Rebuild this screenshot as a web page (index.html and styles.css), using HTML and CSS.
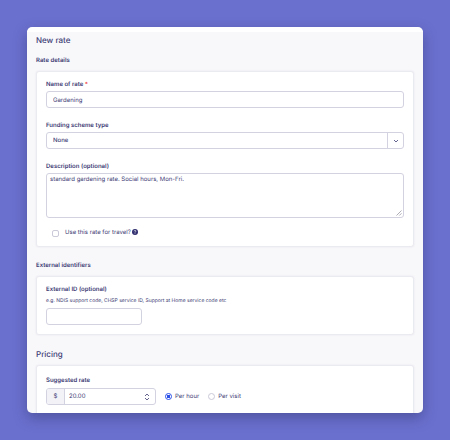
FILE: index.html
```html
<!DOCTYPE html>
<html lang="en">
<head>
  <meta charset="UTF-8">
  <meta name="viewport" content="width=device-width, initial-scale=1.0">
  <title>New rate</title>
  <link rel="stylesheet" href="styles.css">
</head>
<body>

  <main class="window">
    <form class="page">
      <h1>New rate</h1>

      <h2>Rate details</h2>
      <section class="card">
        <div class="field">
          <label for="name">Name of rate <span class="required">*</span></label>
          <input class="control" type="text" id="name" value="Gardening">
        </div>
        <div class="field">
          <label for="scheme">Funding scheme type</label>
          <div class="select">
            <select class="control" id="scheme">
              <option>None</option>
            </select>
            <span class="select-arrow">
              <svg width="6" height="4" viewBox="0 0 6 4"><path d="M1 1l2 2 2-2"/></svg>
            </span>
          </div>
        </div>
        <div class="field">
          <label for="description">Description (optional)</label>
          <div class="area">
            <textarea class="control" id="description">standard gardening rate. Social hours, Mon-Fri.</textarea>
            <svg class="grip" width="6" height="6" viewBox="0 0 6 6"><path d="M.5 5.5l5-5M3.3 5.5l2.2-2.2"/></svg>
          </div>
        </div>
        <div class="travel">
          <input type="checkbox" id="travel">
          <label for="travel">Use this rate for travel?</label>
          <svg class="help" width="6" height="6" viewBox="0 0 12 12">
            <circle cx="6" cy="6" r="6"/>
            <path d="M4.200 4.600c0-2.400 3.600-2.400 3.600-.2C7.800 5.800 6 5.700 6 7.200M6 8.500v1.200"/>
          </svg>
        </div>
      </section>

      <h2>External identifiers</h2>
      <section class="card">
        <div class="field">
          <label for="external">External ID (optional)</label>
          <p class="hint">e.g. NDIS support code, CHSP service ID, Support at Home service code etc</p>
          <input class="control short" type="text" id="external">
        </div>
      </section>

      <h1>Pricing</h1>
      <section class="card card-pricing">
        <div class="field">
          <label for="rate">Suggested rate</label>
          <div class="pricing">
            <div class="money">
              <span class="currency">$</span>
              <input type="text" inputmode="decimal" id="rate" value="20.00">
              <svg class="stepper" width="6" height="8" viewBox="0 0 6 8"><path d="M1 3l2-2 2 2M1 5l2 2 2-2"/></svg>
            </div>
            <label class="choice"><input type="radio" name="unit" checked>Per hour</label>
            <label class="choice"><input type="radio" name="unit">Per visit</label>
          </div>
        </div>
      </section>
    </form>
  </main>

</body>
</html>
```

FILE: styles.css
```css
* {
  box-sizing: border-box;
}

body {
  margin: 0;
  height: 100vh;
  padding: 27px;
  background: #6a70ce;
  color: #3d3b74;
  font-family: Inter, sans-serif;
  font-size: 6px;
  line-height: 8px;
  text-rendering: geometricPrecision;
}

.window {
  height: 100%;
  overflow: hidden;
  border-top: 5px solid #ffffff;
  border-radius: 5px;
  background: #f8f8fb;
  box-shadow: 0 5px 14px rgba(40, 40, 90, 0.4);
}

.page {
  padding: 3px 9px;
}

h1 {
  margin: 0;
  font-size: 8px;
  font-weight: 500;
  line-height: 10px;
}

h2 {
  margin: 12px 0 6px;
  font-size: 6px;
  font-weight: 600;
  line-height: 8px;
}

.card {
  padding: 9px;
  border: 1px solid #eaeaf1;
  border-radius: 3px;
  background: #ffffff;
  box-shadow: 0 0 2px rgba(60, 60, 110, 0.1);
}

.field {
  display: flex;
  flex-direction: column;
  gap: 2px;
}

.field + .field {
  margin-top: 14px;
}

.field > label {
  font-weight: 600;
}

.required {
  color: #ee4a4a;
}

input,
select,
textarea {
  margin: 0;
  color: inherit;
  font: inherit;
  text-rendering: inherit;
}

.control {
  display: block;
  width: 100%;
  height: 17px;
  padding: 1px 6px 0;
  border: 1px solid #d2d2e0;
  border-radius: 3px;
  background: #ffffff;
}

.select,
.area {
  position: relative;
}

.select .control {
  appearance: none;
  font-weight: 500;
}

.select-arrow {
  position: absolute;
  top: 0;
  right: 0;
  bottom: 0;
  display: flex;
  align-items: center;
  justify-content: center;
  width: 17px;
  border-left: 1px solid #d2d2e0;
  pointer-events: none;
}

.select-arrow path,
.grip path,
.stepper path {
  fill: none;
  stroke: #66658f;
}

.area .control {
  height: 45px;
  padding: 2px 3px;
  resize: none;
}

.grip {
  position: absolute;
  right: 2px;
  bottom: 2px;
}

.grip path {
  stroke: #8a8a96;
  stroke-width: 0.7;
}

.travel {
  display: flex;
  align-items: center;
  margin: 11px 0 0 6px;
}

input[type="checkbox"],
input[type="radio"] {
  appearance: none;
  width: 7px;
  height: 7px;
  margin-right: 6px;
  border: 1px solid #cacad9;
  border-radius: 2px;
  background: #ffffff;
}

.help {
  margin: 0 0 2px 1px;
  fill: #302e6e;
}

.help path {
  fill: none;
  stroke: #ffffff;
  stroke-width: 1.4;
}

.card + h2 {
  margin-top: 15px;
}

.hint {
  margin: 0;
  font-size: 5px;
  line-height: 10px;
}

.short {
  width: 96px;
}

.card + h1 {
  margin: 14px 0 6px;
}

.card-pricing {
  padding-top: 11px;
  padding-bottom: 14px;
}

.card-pricing .field {
  gap: 3px;
}

.pricing {
  display: flex;
  align-items: center;
}

.money {
  display: flex;
  align-items: center;
  width: 110px;
  height: 17px;
  margin-right: 9px;
  overflow: hidden;
  border: 1px solid #d2d2e0;
  border-radius: 3px;
}

.currency {
  width: 18px;
  border-right: 1px solid #d2d2e0;
  background: #f3f3f7;
  line-height: 16px;
  text-align: center;
}

.money input {
  flex: 1;
  min-width: 0;
  padding: 0 4px;
  border: 0;
}

.stepper {
  margin-right: 5px;
}

.choice {
  display: flex;
  align-items: center;
  margin-right: 9px;
}

.choice input[type="radio"] {
  margin-right: 3px;
  border-radius: 50%;
}

.choice input:checked {
  border-color: #2b50e8;
  background: radial-gradient(#2b50e8 45%, #ffffff 55%);
}
```
